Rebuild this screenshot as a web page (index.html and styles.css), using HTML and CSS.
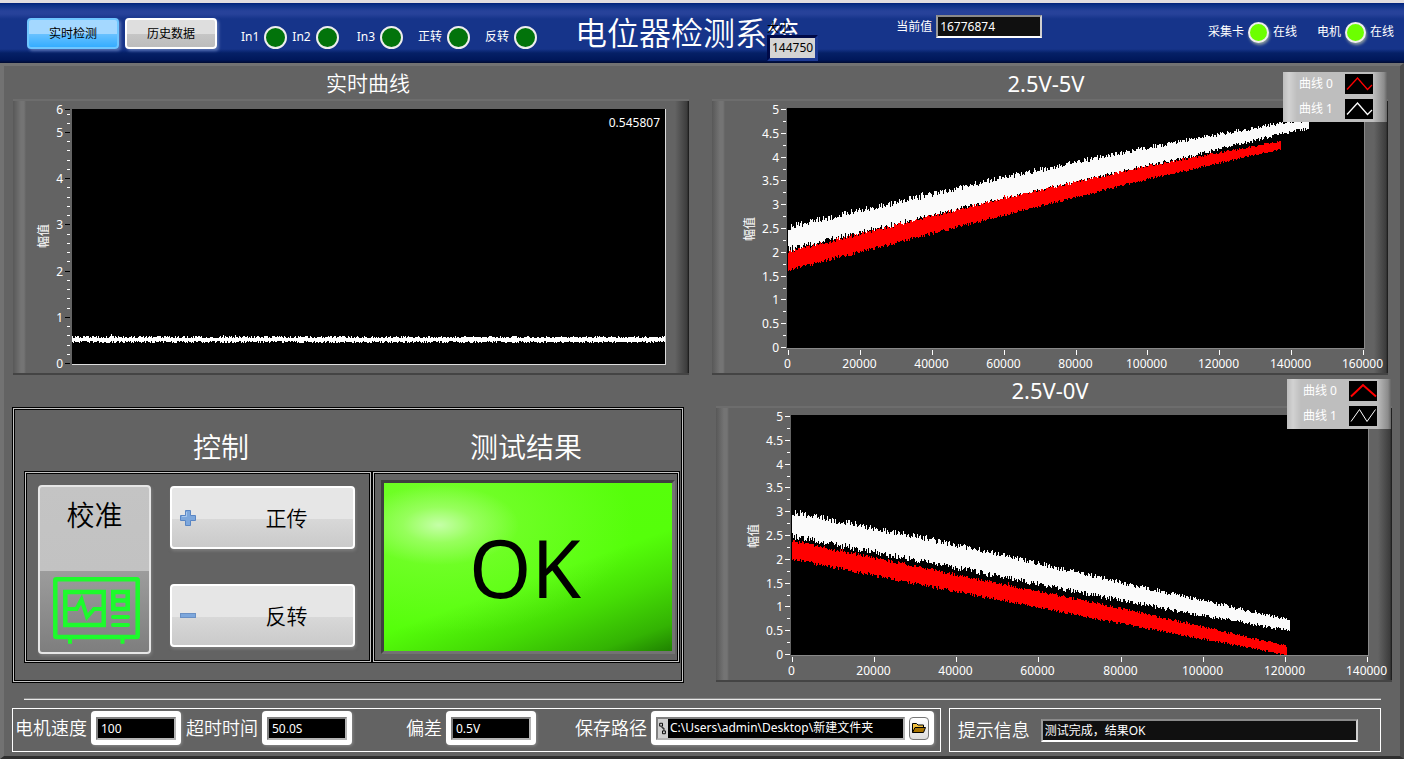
FILE: index.html
```
<!DOCTYPE html>
<html lang="zh-CN">
<head>
<meta charset="utf-8">
<title>电位器检测系统</title>
<link rel="stylesheet" href="styles.css">
</head>
<body>
<div class="app">
  <header class="topbar">
    <nav class="tabs">
      <button class="tab tab-active" type="button">实时检测</button>
      <button class="tab" type="button">历史数据</button>
    </nav>
    <ul class="leds">
      <li class="led-item">In1<span class="led"></span></li>
      <li class="led-item">In2<span class="led"></span></li>
      <li class="led-item led-spaced">In3<span class="led"></span></li>
      <li class="led-item led-group">正转<span class="led"></span></li>
      <li class="led-item led-group">反转<span class="led"></span></li>
    </ul>
    <div class="title-wrap">
      <h1 class="title">电位器检测系统</h1>
      <div class="size-box">
        <span class="size-label">大小</span>
        <output class="size-value">144750</output>
      </div>
    </div>
    <div class="current">
      <label for="current">当前值</label>
      <input class="field" id="current" type="text" value="16776874" readonly>
    </div>
    <ul class="links">
      <li class="link-item">采集卡<span class="led led-on"></span>在线</li>
      <li class="link-item">电机<span class="led led-on"></span>在线</li>
    </ul>
  </header>

  <main class="main">
    <div class="columns">
      <section class="column">
        <figure class="chart">
          <figcaption class="chart-title chart-title-cn">实时曲线</figcaption>
          <svg class="plot plot-live" id="chart-live" viewBox="0 0 676 276"></svg>
        </figure>
        <div class="group">
          <h2 class="group-title group-title-control">控制</h2>
          <h2 class="group-title">测试结果</h2>
          <div class="cell control">
            <button class="calibrate" type="button">
              <span>校准</span>
              <svg class="scope" viewBox="0 0 87 67" aria-hidden="true">
                <g fill="none" stroke="#1dfb2c">
                  <rect x="2.300" y="2.300" width="82.400" height="57.700" rx="1" stroke-width="4.500"/>
                  <rect x="12.300" y="15" width="38.400" height="33" stroke-width="4.500"/>
                  <path d="M14 32H23.500L28.500 22.500L34 40L41 32H50" stroke-width="4"/>
                  <path d="M60.300 12.700V34M74.700 12.700V34M58 15H77M58 23.500H77M58 32H77" stroke-width="4.600"/>
                  <path d="M60 40H75M60 48H75" stroke-width="4" stroke-linecap="round"/>
                  <path d="M17 61V66.700M69.500 61V66.700" stroke-width="4"/>
                </g>
              </svg>
            </button>
            <div class="moves">
              <button class="move" type="button">
                <svg class="sign" viewBox="0 0 16 16" aria-hidden="true">
                  <path d="M5.500 .5h5v5h5v5h-5v5h-5v-5h-5v-5h5z" fill="#7da7dc" stroke="#5a86c4"/>
                  <path d="M6.500 2V6.500H2" fill="none" stroke="#a9c8ee"/>
                </svg>
                <span>正传</span>
              </button>
              <button class="move" type="button">
                <svg class="sign" viewBox="0 0 16 16" aria-hidden="true">
                  <rect x=".5" y="5.500" width="15" height="4" fill="#7da7dc" stroke="#6a90c4"/>
                </svg>
                <span>反转</span>
              </button>
            </div>
          </div>
          <div class="cell result"><output class="verdict">OK</output></div>
        </div>
      </section>

      <section class="column">
        <figure class="chart chart-rise">
          <figcaption class="chart-title">2.5V-5V</figcaption>
          <svg class="plot" id="chart-rise" viewBox="0 0 676 276"></svg>
          <ul class="legend">
            <li class="legend-item">曲线 0
              <svg class="swatch" viewBox="0 0 28 20"><path d="M2 15.500L12.500 4L22.500 15.500L27 11" fill="none" stroke="#f00" stroke-width="1.300"/></svg>
            </li>
            <li class="legend-item">曲线 1
              <svg class="swatch" viewBox="0 0 28 20"><path d="M2 15.500L12.500 4L22.500 15.500L27 11" fill="none" stroke="#fff" stroke-width="1.300"/></svg>
            </li>
          </ul>
        </figure>
        <figure class="chart chart-fall">
          <figcaption class="chart-title">2.5V-0V</figcaption>
          <svg class="plot" id="chart-fall" viewBox="0 0 676 276"></svg>
          <ul class="legend">
            <li class="legend-item">曲线 0
              <svg class="swatch" viewBox="0 0 28 20"><path d="M2 15.500L14 4L27 15.500" fill="none" stroke="#f00" stroke-width="2"/></svg>
            </li>
            <li class="legend-item">曲线 1
              <svg class="swatch" viewBox="0 0 28 20"><path d="M2 15.500L10.500 3.500L18 15.500L26.500 3.500" fill="none" stroke="#fff"/></svg>
            </li>
          </ul>
        </figure>
      </section>
    </div>

    <hr class="divider">

    <div class="bottom">
      <form class="box settings">
        <label class="caption" for="speed">电机速度</label>
        <div class="frame"><input class="entry" id="speed" type="text" value="100"></div>
        <label class="caption" for="timeout">超时时间</label>
        <div class="frame"><input class="entry" id="timeout" type="text" value="50.0S"></div>
        <label class="caption caption-far" for="offset">偏差</label>
        <div class="frame"><input class="entry" id="offset" type="text" value="0.5V"></div>
        <label class="caption caption-path" for="path">保存路径</label>
        <div class="frame frame-path">
          <div class="path">
            <svg class="path-icon" viewBox="0 0 10 20" aria-hidden="true"><path d="M1.500 4.500h3v3h-3zM4.500 12.500h3v3h-3zM4 8V9.500H6V12" fill="none" stroke="#000"/></svg>
            <input class="path-input" id="path" type="text" value="C:\Users\admin\Desktop\新建文件夹">
          </div>
          <button class="browse" type="button" aria-label="浏览">
            <svg class="folder" viewBox="0 0 14 12" aria-hidden="true">
              <path d="M.5 10.500V1.500H4.500L6 3H11.500V5.500" fill="#f0c040" stroke="#000"/>
              <path d="M.5 10.500L3 5.500H13.500L11.500 10.500Z" fill="#a87400" stroke="#000"/>
            </svg>
          </button>
        </div>
      </form>
      <div class="box hint">
        <label class="caption" for="hint">提示信息</label>
        <input class="field field-hint" id="hint" type="text" value="测试完成，结果OK" readonly>
      </div>
    </div>
  </main>
</div>
<script src="charts.js"></script>
</body>
</html>
```

FILE: styles.css
```
* {
  box-sizing: border-box;
}

body {
  margin: 0;
  background: #636363;
  color: #fff;
  font: 12px/18px "Noto Sans", "Noto Sans CJK SC", sans-serif;
}

ul {
  list-style: none;
  margin: 0;
  padding: 0;
}

button,
input {
  font: inherit;
  margin: 0;
}

h1,
h2,
figure {
  margin: 0;
}

.app {
  display: flex;
  flex-direction: column;
  min-height: 100vh;
  border-top: 3px solid #e0dcdf;
}

/* Top bar */

.topbar {
  display: flex;
  align-items: center;
  height: 60px;
  padding: 0 10px 0 27px;
  background: linear-gradient(#001f78, #0a2f86 2px, #27429a 8px, #27429a 11px, #16348a 16px, #16348a 46px, #052066 50px, #00175a 57px, #000a30);
}

.tabs {
  display: flex;
  gap: 6px;
}

.tab {
  width: 92px;
  height: 31px;
  padding: 2px 0 0;
  border: 2px solid #fff;
  border-radius: 4px;
  background: linear-gradient(#dedede, #dedede 50%, #c6c6c6 50%, #bcbcbc);
  box-shadow: 2px 2px 3px #5670b0;
  color: #000;
}

.tab-active {
  border-color: #6fc6ff;
  background: linear-gradient(#a4d8ff, #a4d8ff 50%, #6bc2ff 50%, #35adff);
}

.leds {
  display: flex;
  gap: 5px;
  margin-left: 24px;
  padding-top: 8px;
}

.led-item,
.link-item {
  display: flex;
  align-items: center;
  gap: 5px;
}

.link-item {
  gap: 4px;
}

.led-spaced {
  margin-left: 13px;
}

.led-group {
  margin-left: 10px;
}

.led {
  width: 23px;
  height: 23px;
  border: 2px solid #eee;
  border-radius: 50%;
  background: #02730b;
}

.led-on {
  width: 21px;
  height: 21px;
  background: #6cff00;
  box-shadow: 1px 2px 3px #8b9aa0;
}

.title-wrap {
  position: relative;
  margin-left: 38px;
}

.title {
  font-size: 32px;
  line-height: 48px;
  font-weight: 350;
  white-space: nowrap;
}

.size-box {
  position: absolute;
  top: 11px;
  right: -19px;
  display: flex;
  flex-direction: column;
  color: #000;
}

.size-label {
  line-height: 15px;
}

.size-value {
  border: 3px solid;
  border-color: #000a48 #1d3a94 #1d3a94 #000a48;
  background: #d4d4d4;
  padding: 0 2px;
  line-height: 20px;
}

.current {
  display: flex;
  align-items: center;
  gap: 4px;
  margin-left: 97px;
  padding-bottom: 13px;
}

.field {
  width: 106px;
  height: 23px;
  padding: 0 2px;
  border: 2px solid;
  border-color: #8a8a8a #cfcfcf #fff #9a9a9a;
  background: #101010;
  color: #fff;
}

.links {
  display: flex;
  gap: 20px;
  margin-left: auto;
  padding-bottom: 2px;
}

/* Main area */

.main {
  flex: 1;
  display: flex;
  flex-direction: column;
  padding: 2px 8px 0 9px;
  border: solid;
  border-width: 3px 4px;
  border-color: #727272 #4c4c4c #2e2e2e #727272;
}

.columns {
  display: grid;
  grid-template-columns: 676fr 680fr;
  column-gap: 23px;
}

.chart {
  position: relative;
}

.chart-rise {
  margin-right: 4px;
}

.chart-fall {
  margin-left: 4px;
}

.chart-title {
  line-height: 31px;
  font-size: 22px;
  text-align: center;
  padding-right: 8px;
}

.chart-title-cn {
  padding-left: 42px;
  font-size: 21px;
  font-weight: 350;
}

.plot {
  display: block;
  width: 100%;
  height: auto;
  background: linear-gradient(90deg, #585858, #747474 8px, #747474 11px, #636363 13px, #636363 calc(100% - 14px), #3c3c3c calc(100% - 2px), #161616);
  box-shadow: inset 0 2px #6d6d6d, inset 0 -2px #444;
}

.plot text {
  fill: #fff;
  font-size: 12px;
}

.legend {
  position: absolute;
  top: 4px;
  right: 1px;
  width: 104px;
  padding: 2px 14px 3px 16px;
  background: linear-gradient(90deg, #bdbdbd, #d2d2d2 6px, #bebebe 14px, #bebebe calc(100% - 14px), #8c8c8c calc(100% - 3px), #666);
}

.legend-item {
  display: flex;
  align-items: center;
  justify-content: space-between;
  height: 20px;
}

.legend-item + .legend-item {
  margin-top: 5px;
}

.swatch {
  width: 28px;
  height: 20px;
  background: #000;
}

/* Control group */

.group,
.cell {
  border: 1px solid #000;
  box-shadow: inset 0 0 0 1px #c4c4c4, inset 0 0 0 2px #000;
}

.group {
  display: grid;
  grid-template-columns: 348fr 308fr;
  grid-template-rows: 63px 192px;
  margin: 32px 5px 0 -1px;
  padding: 0 3px 19px 11px;
}

.group-title {
  font-size: 28px;
  font-weight: 350;
  line-height: 78px;
  text-align: center;
}

.group-title-control {
  padding-left: 46px;
}

.control {
  display: flex;
  gap: 19px;
  padding: 13px 16px 13px 13px;
}

.calibrate {
  display: flex;
  flex-direction: column;
  align-items: center;
  justify-content: space-between;
  width: 113px;
  height: 169px;
  padding: 6px 0 8px;
  border: 2px solid #e6e6e6;
  border-radius: 4px;
  background: linear-gradient(#c4c4c4, #c2c2c2 51%, #9c9c9c 51%, #7e7e7e);
  box-shadow: 1px 2px 3px #7c7c7c;
  color: #000;
  font-size: 28px;
  font-weight: 350;
  line-height: 44px;
}

.scope {
  width: 87px;
  height: 67px;
  margin-left: 3px;
}

.moves {
  flex: 1;
  display: flex;
  flex-direction: column;
  gap: 35px;
  padding-top: 1px;
}

.move {
  display: flex;
  align-items: center;
  height: 63px;
  padding: 0 8px;
  border: 2px solid #fff;
  border-radius: 4px;
  background: linear-gradient(#e6e6e6, #e6e6e6 52%, #d8d8d8 52%, #cacaca);
  box-shadow: 1px 2px 3px #7c7c7c;
  color: #000;
  font-size: 21px;
  font-weight: 350;
}

.move span {
  flex: 1;
  padding-left: 32px;
}

.sign {
  width: 16px;
  height: 16px;
}

.result {
  display: flex;
  padding: 8px 4px 8px 8px;
}

.verdict {
  flex: 1;
  display: flex;
  align-items: center;
  justify-content: center;
  border: 3px solid;
  border-color: #3f3f3f #737373 #737373 #3f3f3f;
  background:
    radial-gradient(ellipse 80px 40px at 55px 42px, rgba(205, 255, 180, .9), rgba(190, 255, 150, .45) 45%, rgba(160, 255, 90, 0)),
    radial-gradient(ellipse 190px 110px at 60px 42px, rgba(150, 255, 80, .6), rgba(120, 255, 40, 0)),
    linear-gradient(160deg, #58ff0c, #55ff0a 55%, #45dd05 73%, #33b303 90%, #1f8200);
  color: #000;
  font-size: 80px;
  padding-right: 6px;
}

/* Bottom strip */

.divider {
  width: calc(100% - 22px);
  height: 2px;
  margin: 15px 11px 8px;
  border: 0;
  border-top: 1px solid #8a8a8a;
  background: #e8e8e8;
}

.bottom {
  display: grid;
  grid-template-columns: 928fr 432fr;
  gap: 8px;
  margin: 0 11px 0 -1px;
}

.box {
  display: flex;
  align-items: center;
  height: 44px;
  border: 1px solid #fff;
}

.settings {
  padding: 0 6px 4px 2px;
}

.hint {
  gap: 11px;
  padding: 0 22px 0 8px;
}

.caption {
  font-size: 18px;
  font-weight: 350;
  white-space: nowrap;
}

.frame {
  display: flex;
  align-items: center;
  height: 34px;
  margin: 0 5px 0 4px;
  padding: 0 5px;
  border-radius: 4px;
  background: #fff;
  box-shadow: 1px 1px 3px #888;
}

.entry {
  width: 80px;
  height: 23px;
  padding: 0 3px;
  border: 2px solid;
  border-color: #808080 #b4b4b4 #b4b4b4 #808080;
  background: #000;
  color: #fff;
}

.caption-far {
  margin-left: 49px;
}

.caption-path {
  margin-left: 34px;
}

.frame-path {
  flex: 1;
  gap: 4px;
  margin-right: 0;
}

.path {
  flex: 1;
  display: flex;
  height: 23px;
  border: 2px solid;
  border-color: #808080 #b4b4b4 #b4b4b4 #808080;
  background: #000;
}

.path-icon {
  width: 10px;
  background: #cfcfcf;
}

.path-input {
  flex: 1;
  min-width: 0;
  padding: 0 2px;
  border: 0;
  background: #000;
  color: #fff;
}

.browse {
  display: flex;
  align-items: center;
  justify-content: center;
  width: 20px;
  height: 23px;
  padding: 0;
  border: 1px solid #777;
  border-radius: 4px;
  background: linear-gradient(#fff, #ddd);
}

.folder {
  width: 14px;
  height: 12px;
}

.field-hint {
  flex: 1;
  min-width: 0;
}
```

FILE: charts.js
```
const NS = "http://www.w3.org/2000/svg";

function add(parent, name, attrs, text) {
  const el = document.createElementNS(NS, name);
  for (const key in attrs) el.setAttribute(key, attrs[key]);
  if (text !== undefined) el.textContent = text;
  parent.appendChild(el);
}

// Small repeatable generator, so the noise is the same on every load.
function generator(seed) {
  return () => {
    seed = (seed * 1664525 + 1013904223) % 4294967296;
    return seed / 4294967296;
  };
}

function at(stops, x, side) {
  let i = 1;
  while (i < stops.length - 1 && x > stops[i][0]) i++;
  const a = stops[i - 1], b = stops[i];
  return a[side] + (b[side] - a[side]) * (x - a[0]) / (b[0] - a[0]);
}

// stops: [x, top, bottom]; the band is one column per unit of x.
function band(svg, stops, color, noise, seed) {
  const rnd = generator(seed);
  const end = stops[stops.length - 1][0];
  let d = "";
  for (let x = stops[0][0]; x < end; x++) {
    const k = noise * (1 - 0.5 * (x - stops[0][0]) / (end - stops[0][0]));
    const spike = rnd() > 0.99 ? k / 2 : 0;
    const top = at(stops, x, 1) + (0.5 - rnd()) * k - spike;
    const bottom = at(stops, x, 2) + (rnd() - 0.5) * k;
    d += `M${x + 0.5} ${top.toFixed(1)}V${bottom.toFixed(1)}`;
  }
  add(svg, "path", { d, stroke: color, "stroke-width": 1.3, fill: "none" });
}

function frame(svg, x, y, w, h, edge) {
  add(svg, "rect", { x, y, width: w, height: h, fill: "#000" });
  add(svg, "path", { d: `M${x} ${y + h + 0.5}H${x + w + 0.5}V${y}`, stroke: edge, fill: "none" });
}

function yTick(svg, x, y, label, color) {
  add(svg, "path", { d: `M${x - 5} ${y}H${x}`, stroke: color });
  add(svg, "text", { x: x - 7, y: y + 4, "text-anchor": "end" }, label);
}

function yTitle(svg, x, y) {
  add(svg, "text", { transform: `translate(${x} ${y}) rotate(-90)`, "text-anchor": "middle" }, "幅值");
}

function live() {
  const svg = document.getElementById("chart-live");
  frame(svg, 59, 10, 593, 255, "#ddd");
  for (let i = 0; i <= 27; i++) {
    const y = Math.round(264 - i * 9.24) + 0.5;
    if (i % 5) add(svg, "path", { d: `M54 ${y}H57`, stroke: "#fff" });
    else yTick(svg, 57, y, i / 5, "#000");
  }
  yTick(svg, 57, 10.5, 6, "#000");
  yTitle(svg, 35, 137);
  band(svg, [[59, 238, 243], [652, 238, 243]], "#fff", 3, 7);
  add(svg, "text", { x: 647, y: 28, "text-anchor": "end" }, "0.545807");
}

function sweep(id, xMax, bands) {
  const svg = document.getElementById(id);
  frame(svg, 75, 9, 577, 240, "#888");
  for (let i = 0; i <= 20; i++) {
    const y = Math.round(248 - i * 11.9) + 0.5;
    if (i % 2) add(svg, "path", { d: `M71 ${y}H74`, stroke: "#fff" });
    else yTick(svg, 74, y, i / 4, "#fff");
  }
  const steps = xMax / 20000;
  for (let i = 0; i <= steps; i++) {
    const x = Math.round(76 + i * 575 / steps) + 0.5;
    add(svg, "path", { d: `M${x} 251V256`, stroke: "#fff" });
    add(svg, "text", { x: x - 1, y: 269, "text-anchor": "middle" }, i * 20000);
  }
  yTitle(svg, 42, 130);
  bands.forEach(([stops, color, noise], i) => band(svg, stops, color, noise, 31 + i));
}

function crisp(id) {
  const paths = document.getElementById(id).querySelectorAll("path");
  paths.forEach((p) => p.setAttribute("shape-rendering", "crispEdges"));
}

live();
sweep("chart-rise", 160000, [
  [[[76, 128, 150], [288, 79, 101], [431, 49, 68], [569, 24, 35], [597, 21, 29]], "#fafafa", 7],
  [[[76, 153, 171], [288, 100, 117], [431, 68, 81], [569, 42, 50]], "#f00", 4],
]);
sweep("chart-fall", 140000, [
  [[[76, 106, 130], [242, 139, 162], [408, 177, 195], [574, 214, 225]], "#fafafa", 7],
  [[[76, 135, 153], [242, 169, 186], [408, 203, 218], [571, 240, 249]], "#f00", 4],
]);
["chart-live", "chart-rise", "chart-fall"].forEach(crisp);
```
